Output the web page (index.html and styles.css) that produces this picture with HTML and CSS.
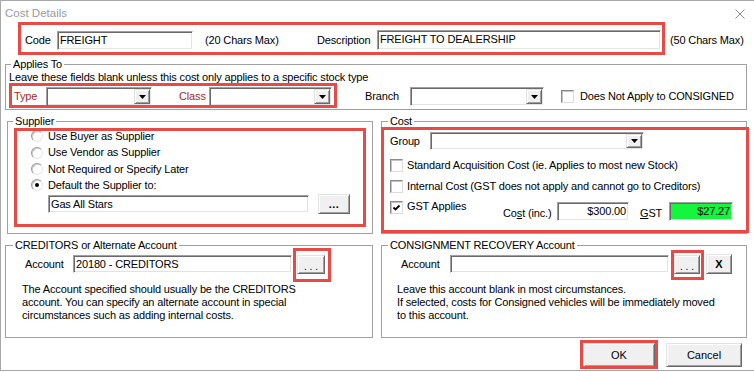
FILE: index.html
```html
<!DOCTYPE html>
<html>
<head>
<meta charset="utf-8">
<title>Cost Details</title>
<link rel="stylesheet" href="styles.css">
</head>
<body>
<div class="window">
  <div class="titlebar">
    <span class="title">Cost Details</span>
    <svg class="close" width="10" height="10" viewBox="0 0 10 10"><path d="M0.5 0.5L9.5 9.5M9.5 0.5L0.5 9.5" stroke="#8c8c8c" stroke-width="1" fill="none"/></svg>
  </div>

  <div class="row1">
    <span class="w-code">Code</span>
    <div class="field f-code">FREIGHT</div>
    <span class="max20">(20 Chars Max)</span>
    <span class="w-desc">Description</span>
    <div class="field f-desc">FREIGHT TO DEALERSHIP</div>
    <span class="max50">(50 Chars Max)</span>
  </div>

  <fieldset class="grp applies">
    <legend>Applies To</legend>
    <div class="hint">Leave these fields blank unless this cost only applies to a specific stock type</div>
    <div class="row2">
      <span class="lbl-type red">Type</span>
      <div class="field combo c-type"><span class="cbtn"><svg width="7" height="4" viewBox="0 0 7 4"><path d="M0 0H7L3.5 4Z" fill="#000"/></svg></span></div>
      <span class="lbl-class red">Class</span>
      <div class="field combo c-class"><span class="cbtn"><svg width="7" height="4" viewBox="0 0 7 4"><path d="M0 0H7L3.5 4Z" fill="#000"/></svg></span></div>
      <span class="lbl-branch">Branch</span>
      <div class="field combo c-branch"><span class="cbtn"><svg width="7" height="4" viewBox="0 0 7 4"><path d="M0 0H7L3.5 4Z" fill="#000"/></svg></span></div>
      <span class="chk chk-consigned"></span>
      <span class="chk-text">Does Not Apply to CONSIGNED</span>
    </div>
  </fieldset>

  <div class="row3">
    <fieldset class="grp supplier">
      <legend>Supplier</legend>
      <div class="sup-body">
        <div class="radio-row r1"><span class="radio"></span><span class="rtext">Use Buyer as Supplier</span></div>
        <div class="radio-row r2"><span class="radio"></span><span class="rtext">Use Vendor as Supplier</span></div>
        <div class="radio-row r3"><span class="radio"></span><span class="rtext">Not Required or Specify Later</span></div>
        <div class="radio-row r4"><span class="radio on"></span><span class="rtext">Default the Supplier to:</span></div>
        <div class="sup-row">
          <div class="field f-sup">Gas All Stars</div>
          <div class="btn b-sup">...</div>
        </div>
      </div>
    </fieldset>

    <fieldset class="grp cost">
      <legend>Cost</legend>
      <div class="cost-body">
        <div class="group-row">
          <span class="lbl-group">Group</span>
          <div class="field combo c-group"><span class="cbtn"><svg width="7" height="4" viewBox="0 0 7 4"><path d="M0 0H7L3.5 4Z" fill="#000"/></svg></span></div>
        </div>
        <div class="chk-row"><span class="chk"></span><span class="ctext">Standard Acquisition Cost (ie. Applies to most new Stock)</span></div>
        <div class="chk-row"><span class="chk"></span><span class="ctext">Internal Cost (GST does not apply and cannot go to Creditors)</span></div>
        <div class="gst-row">
          <div class="gst-chk"><span class="chk on"><svg width="11" height="11" viewBox="0 0 11 11"><path d="M2.5 5.5L4.5 7.5L8.5 3.5" stroke="#000" stroke-width="1.8" fill="none"/></svg></span><span class="ctext">GST Applies</span></div>
          <div class="cost-fields">
            <span class="lbl-cost">Co<u>s</u>t (inc.)</span>
            <div class="field num f-cost">$300.00</div>
            <span class="lbl-gst"><u>G</u>ST</span>
            <div class="field num f-gst">$27.27</div>
          </div>
        </div>
      </div>
    </fieldset>
  </div>

  <div class="row4">
    <fieldset class="grp creditors">
      <legend>CREDITORS or Alternate Account</legend>
      <div class="acct-row">
        <span class="lbl-acct">Account</span>
        <div class="field f-acct">20180 - CREDITORS</div>
        <div class="btn b-dots b-cred">. . .</div>
      </div>
      <p class="note">The Account specified should usually be the CREDITORS<br>account. You can specify an alternate account in special<br>circumstances such as adding internal costs.</p>
    </fieldset>

    <fieldset class="grp consign">
      <legend>CONSIGNMENT RECOVERY Account</legend>
      <div class="acct-row">
        <span class="lbl-acct2">Account</span>
        <div class="field f-acct"></div>
        <div class="btn b-dots b-con">. . .</div>
        <div class="btn b-x">X</div>
      </div>
      <p class="note note2">Leave this account blank in most circumstances.<br>If selected, costs for Consigned vehicles will be immediately moved<br>to this account.</p>
    </fieldset>
  </div>

  <div class="actions">
    <div class="btn b-ok">OK</div>
    <div class="btn b-cancel">Cancel</div>
  </div>
</div>

<div class="annot a1"></div>
<div class="annot a2"></div>
<div class="annot a3"></div>
<div class="annot a4"></div>
<div class="annot a5"></div>
<div class="annot a6"></div>
<div class="annot a7"></div>
</body>
</html>
```

FILE: styles.css
```css
* { box-sizing: border-box; }
html, body { margin: 0; padding: 0; }
body {
  width: 754px;
  height: 372px;
  overflow: hidden;
  position: relative;
  background: #ffffff;
  font-family: "Liberation Sans", Arial, sans-serif;
  font-size: 11px;
  line-height: 13px;
  letter-spacing: -0.15px;
  color: #000;
}

.window {
  height: 371px;
  border-top: 1px solid #a8a8a8;
  border-left: 1px solid #a8a8a8;
  border-bottom: 1px solid #a8a8a8;
}

/* title bar */
.titlebar { height: 21px; display: flex; align-items: flex-start; }
.title { margin: 5px 0 0 4px; font-size: 11.5px; line-height: 14px; color: #9a9a9a; letter-spacing: 0; }
.close { margin: 8px 9px 0 auto; display: block; }

/* generic controls */
.field {
  background: #fff;
  border: 1px solid;
  border-color: #a0a0a0 #ffffff #ffffff #a0a0a0;
  box-shadow: inset 1px 1px 0 #696969, inset -1px -1px 0 #e3e3e3;
  padding: 1px 0 0 2px;
  line-height: 14px;
  white-space: nowrap;
  overflow: hidden;
}
.combo { display: flex; justify-content: flex-end; padding: 1px; }
.cbtn {
  width: 16px;
  height: 100%;
  background: #f0f0f0;
  border: 1px solid;
  border-color: #e3e3e3 #696969 #696969 #e3e3e3;
  box-shadow: inset 1px 1px 0 #fff, inset -1px -1px 0 #a0a0a0;
  display: flex;
  align-items: center;
  justify-content: center;
}
.cbtn svg { display: block; }
.btn {
  background: #f0f0f0;
  border: 1px solid;
  border-color: #e3e3e3 #696969 #696969 #e3e3e3;
  box-shadow: inset 1px 1px 0 #fff, inset -1px -1px 0 #a0a0a0;
  display: flex;
  align-items: center;
  justify-content: center;
  flex: none;
}
.chk {
  width: 13px;
  height: 13px;
  flex: none;
  background: #fff;
  border: 1px solid;
  border-color: #8a8a8a #dcdcdc #dcdcdc #8a8a8a;
  box-shadow: inset 1px 1px 0 #c4c4c4;
  display: flex;
  align-items: center;
  justify-content: center;
}
.chk svg { display: block; }
.radio {
  width: 12px;
  height: 12px;
  flex: none;
  border-radius: 50%;
  background: #fff;
  border: 1px solid;
  border-color: #9a9a9a #e6e6e6 #e6e6e6 #9a9a9a;
  box-shadow: inset 1px 1px 0 #cfcfcf;
  display: flex;
  align-items: center;
  justify-content: center;
}
.radio.on::after { content: ""; width: 4px; height: 4px; border-radius: 50%; background: #000; }

fieldset.grp {
  margin: 0;
  padding: 0;
  border: 1px solid #a0a0a0;
  min-width: 0;
}
fieldset.grp legend { padding: 0 2px; line-height: 13px; }

/* row 1 */
.row1 { height: 33px; padding: 3px 0 0 24px; display: flex; align-items: center; }
.w-code { width: 32px; flex: none; }
.f-code { width: 136px; height: 19px; flex: none; }
.max20 { margin-left: 12px; width: 112px; flex: none; }
.w-desc { width: 60px; flex: none; }
.f-desc { width: 284px; height: 20px; flex: none; }
.max50 { margin-left: 9px; flex: none; }

/* applies to */
.applies { margin: 3px 0 0 4px !important; width: 742px; padding-bottom: 3px !important; }
.applies legend { margin-left: 5px; }
.hint { padding-left: 3px; }
.row2 { display: flex; align-items: center; height: 19px; margin-top: 3px; }
.red { color: #a82a22; }
.lbl-type { margin-left: 8px; width: 32px; flex: none; }
.c-type { width: 106px; height: 19px; flex: none; }
.lbl-class { margin-left: 27px; width: 30px; flex: none; }
.c-class { width: 123px; height: 19px; flex: none; }
.lbl-branch { margin-left: 33px; width: 45px; flex: none; }
.c-branch { width: 134px; height: 19px; flex: none; }
.chk-consigned { margin-left: 17px; }
.chk-text { margin-left: 6px; }

/* supplier + cost */
.row3 { display: flex; margin-top: 5px; height: 119px; }
.supplier { margin-left: 6px !important; width: 366px; height: 119px; }
.supplier legend { margin-left: 5px; }
.cost { margin-left: 8px !important; width: 366px; height: 119px; }
.cost legend { margin-left: 6px; }

.sup-body { padding-left: 23px; }
.radio-row { display: flex; align-items: center; height: 16px; }
.radio-row.r2 { height: 17px; }
.rtext { margin-left: 5px; }
.sup-row { display: flex; align-items: center; height: 20px; margin-top: 1px; padding-left: 17px; }
.f-sup { width: 261px; height: 18px; }
.b-sup { margin-left: 9px; width: 32px; height: 20px; font-weight: bold; letter-spacing: 0.5px; padding-top: 1px; }

.cost-body { padding-left: 8px; }
.group-row { display: flex; align-items: center; height: 18px; margin-top: 4px; }
.lbl-group { width: 40px; flex: none; }
.c-group { width: 214px; height: 18px; flex: none; }
.chk-row { display: flex; align-items: center; height: 21px; }
.group-row + .chk-row { margin-top: 5px; }
.ctext { margin-left: 4px; }
.gst-row { display: flex; align-items: flex-start; }
.gst-chk { display: flex; align-items: center; width: 113px; height: 13px; margin-top: 4px; flex: none; }
.gst-chk .ctext { margin-top: -2px; }
.cost-fields { display: flex; align-items: center; height: 19px; margin-top: 5px; }
.lbl-cost { width: 54px; flex: none; padding-top: 3px; }
.num { text-align: right; padding: 1px 2px 0 0; }
.f-cost { width: 72px; height: 19px; flex: none; }
.lbl-gst { margin-left: 11px; width: 29px; flex: none; padding-top: 3px; }
.f-gst { width: 64px; height: 19px; flex: none; background: #14f53e; }

/* creditors + consignment */
.row4 { display: flex; margin-top: 5px; height: 99px; }
.creditors { margin-left: 4px !important; width: 368px; height: 99px; }
.creditors legend { margin-left: 7px; }
.consign { margin-left: 8px !important; width: 366px; height: 99px; }
.consign legend { margin-left: 6px; }
.acct-row { display: flex; align-items: center; height: 20px; margin-top: 2px; padding-left: 19px; }
.lbl-acct { width: 48px; flex: none; }
.lbl-acct2 { width: 49px; flex: none; }
.f-acct { width: 219px; height: 18px; flex: none; }
.b-dots { height: 19px; margin-left: 5px; letter-spacing: 0; padding-top: 4px; font-size: 10px; }
.b-cred { width: 28px; }
.b-con { width: 26px; }
.b-x { width: 26px; height: 20px; margin-left: 6px; font-weight: bold; letter-spacing: 0; }
.note { margin: 9px 0 0 0; padding-left: 16px; }
.note2 { padding-left: 15px; }

/* bottom buttons */
.actions { display: flex; justify-content: flex-end; gap: 11px; margin-top: 5px; padding-right: 12px; }
.b-ok { width: 72px; height: 24px; letter-spacing: 0; }
.b-cancel { width: 76px; height: 24px; letter-spacing: 0; }

/* red annotation rectangles drawn over the dialog */
.annot { position: absolute; border: 3px solid #e84a45; pointer-events: none; }
.a1 { left: 18px; top: 22px; width: 647px; height: 33px; }
.a2 { left: 9px; top: 83px; width: 328px; height: 25px; }
.a3 { left: 14px; top: 128px; width: 352px; height: 99px; }
.a4 { left: 381px; top: 127px; width: 368px; height: 106px; }
.a5 { left: 293px; top: 248px; width: 38px; height: 34px; }
.a6 { left: 671px; top: 250px; width: 33px; height: 30px; }
.a7 { left: 580px; top: 340px; width: 78px; height: 29px; }
```
